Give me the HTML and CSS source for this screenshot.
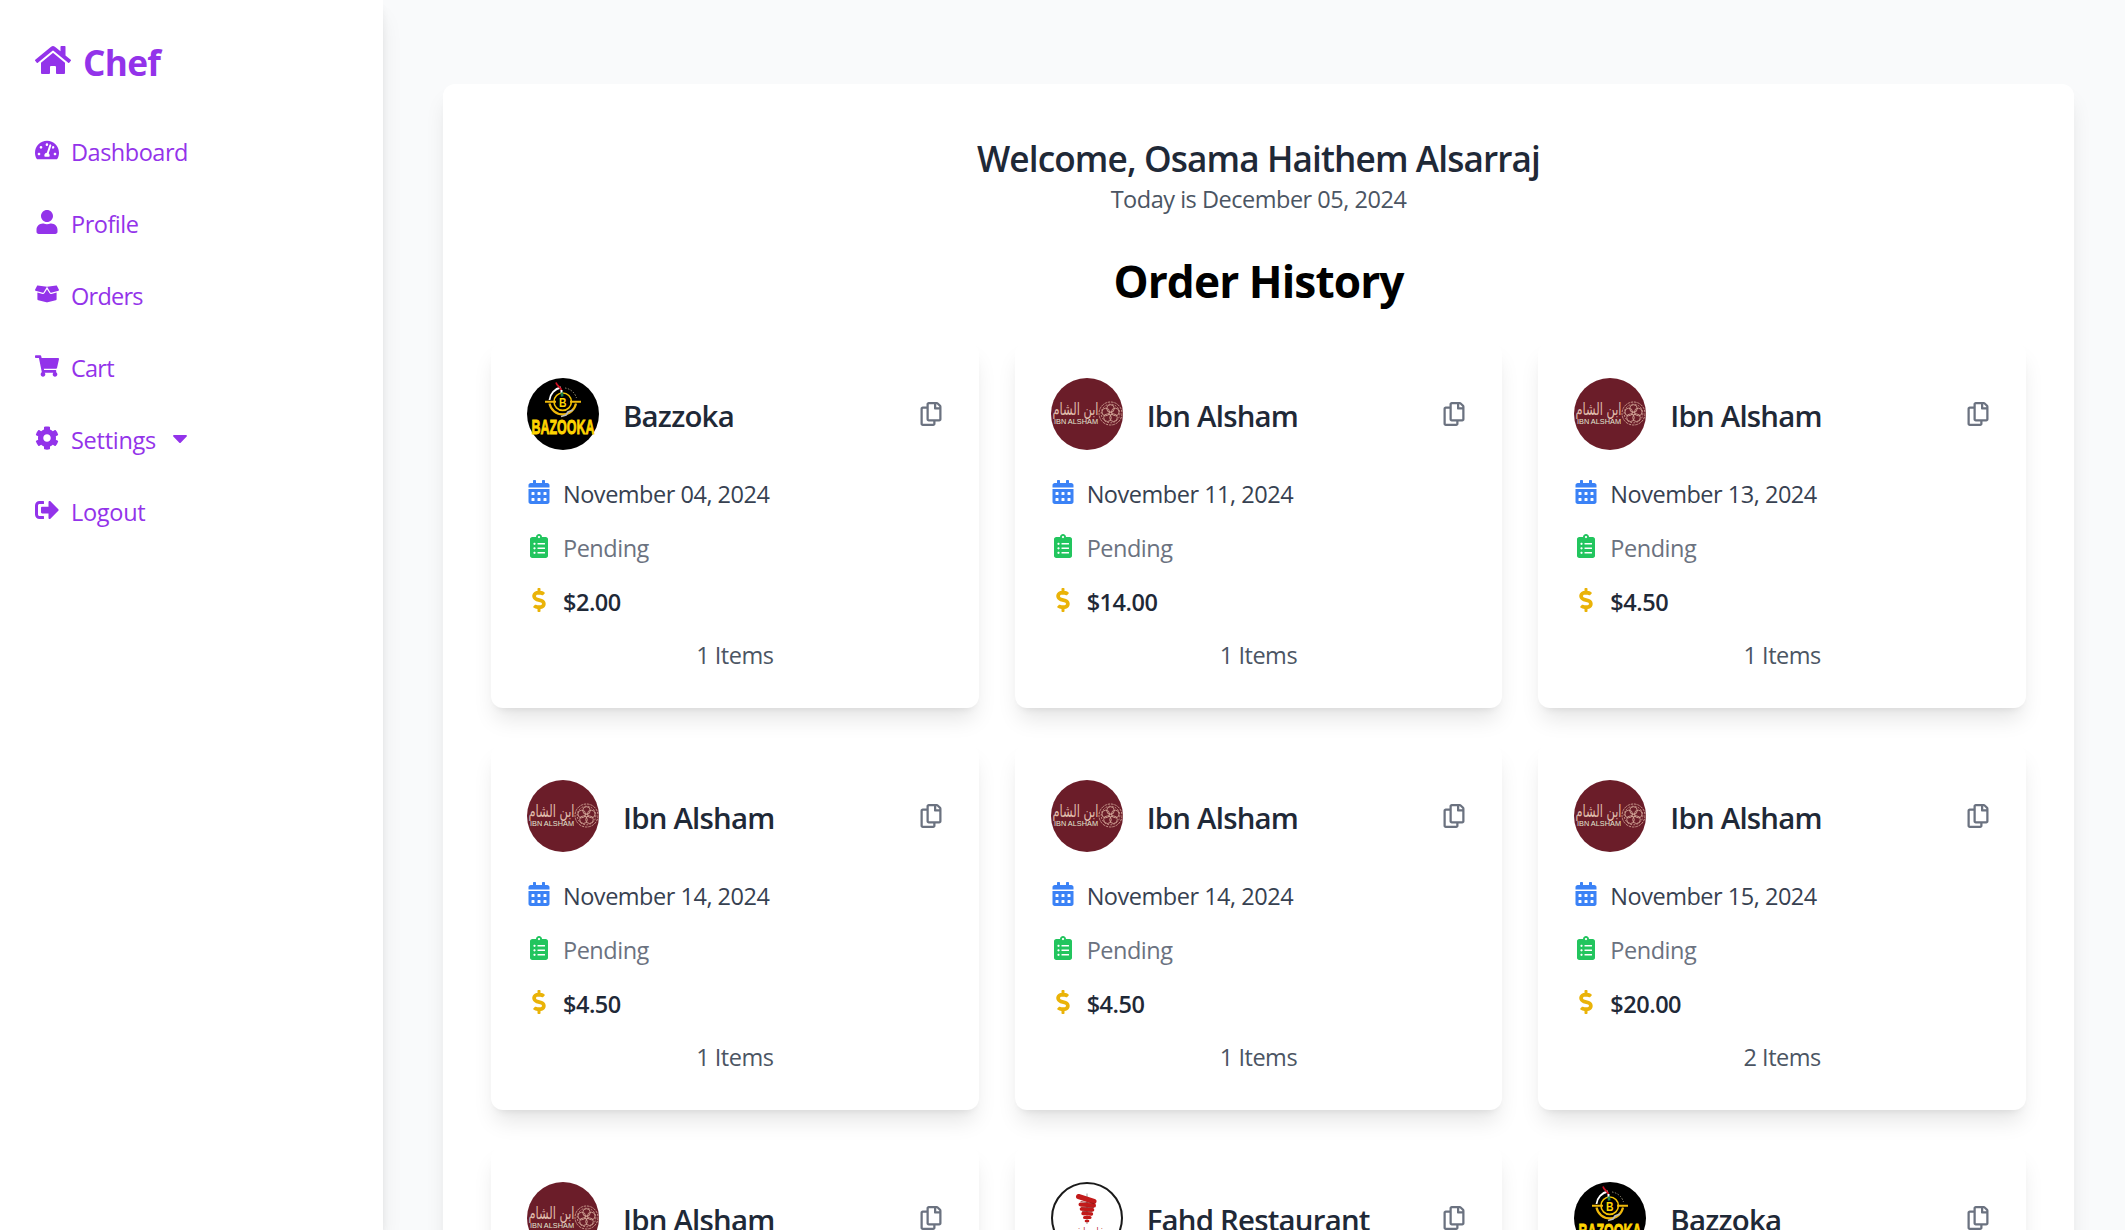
FILE: index.html
```html
<!DOCTYPE html>
<html lang="en">
<head>
<meta charset="utf-8">
<title>Chef - Order History</title>
<link rel="stylesheet" href="styles.css">
</head>
<body>
<svg class="sprite" aria-hidden="true">
  <symbol id="i-home" viewBox="0 0 576 512"><path d="M280.37 148.26L96 300.11V464a16 16 0 0 0 16 16l112.06-.29a16 16 0 0 0 15.92-16V368a16 16 0 0 1 16-16h64a16 16 0 0 1 16 16v95.64a16 16 0 0 0 16 16.05L464 480a16 16 0 0 0 16-16V300L295.67 148.26a12.19 12.19 0 0 0-15.3 0zM571.6 251.47L488 182.56V44.05a12 12 0 0 0-12-12h-56a12 12 0 0 0-12 12v72.61L318.47 43a48 48 0 0 0-61 0L4.34 251.47a12 12 0 0 0-1.6 16.9l25.5 31A12 12 0 0 0 45.15 301l235.22-193.74a12.19 12.19 0 0 1 15.3 0L530.9 301a12 12 0 0 0 16.9-1.6l25.5-31a12 12 0 0 0-1.7-16.93z"/></symbol>
  <symbol id="i-dash" viewBox="0 0 576 512"><path d="M288 32C128.94 32 0 160.94 0 320c0 52.8 14.25 102.26 39.06 144.8 5.61 9.62 16.3 15.2 27.44 15.2h443c11.14 0 21.83-5.58 27.44-15.2C561.75 422.26 576 372.8 576 320c0-159.06-128.94-288-288-288zm0 64c14.71 0 26.58 10.13 30.32 23.65-1.11 2.26-2.64 4.23-3.45 6.67l-9.22 27.67c-5.13 3.49-10.97 6.01-17.64 6.01-17.67 0-32-14.33-32-32S270.33 96 288 96zM96 384c-17.67 0-32-14.33-32-32s14.33-32 32-32 32 14.33 32 32-14.33 32-32 32zm48-160c-17.67 0-32-14.33-32-32s14.33-32 32-32 32 14.33 32 32-14.33 32-32 32zm246.77-72.41l-61.33 184C343.13 347.33 352 364.54 352 384c0 11.72-3.38 22.55-8.88 32H232.88c-5.5-9.45-8.88-20.28-8.88-32 0-33.94 26.5-61.43 59.9-63.59l61.34-184.01c4.17-12.56 17.73-19.45 30.36-15.17 12.57 4.19 19.35 17.79 15.17 30.36zm14.66 57.2l15.52-46.55c3.47-1.29 7.13-2.23 11.05-2.23 17.67 0 32 14.33 32 32s-14.33 32-32 32c-11.38-.01-20.89-6.28-26.57-15.22zM480 384c-17.67 0-32-14.33-32-32s14.33-32 32-32 32 14.33 32 32-14.33 32-32 32z"/></symbol>
  <symbol id="i-user" viewBox="0 0 448 512"><path d="M224 256c70.7 0 128-57.3 128-128S294.7 0 224 0 96 57.3 96 128s57.3 128 128 128zm89.6 32h-16.7c-22.2 10.2-46.9 16-72.9 16s-50.6-5.8-72.9-16h-16.7C60.2 288 0 348.2 0 422.4V464c0 26.5 21.5 48 48 48h352c26.5 0 48-21.5 48-48v-41.6c0-74.2-60.2-134.4-134.4-134.4z"/></symbol>
  <symbol id="i-box" viewBox="0 0 640 512"><path d="M425.7 256c-16.9 0-32.8-9-41.4-23.4L320 126l-64.2 106.6c-8.7 14.5-24.6 23.5-41.5 23.5-4.5 0-9-.6-13.3-1.9L64 215v178c0 14.7 10 27.5 24.2 31l216.2 54.1c10.2 2.5 20.9 2.5 31 0L551.8 424c14.2-3.6 24.2-16.4 24.2-31V215l-137 39.1c-4.3 1.3-8.8 1.9-13.3 1.9zm212.6-112.2L586.8 41c-3.1-6.2-9.8-9.8-16.7-8.9L320 64l91.7 152.1c3.8 6.3 11.4 9.3 18.5 7.3l197.9-56.5c9.9-2.9 14.7-13.9 10.2-23.1zM53.2 41L1.7 143.8c-4.6 9.2.3 20.2 10.1 23l197.9 56.5c7.1 2 14.7-1 18.5-7.3L320 64 69.8 32.1c-6.9-.8-13.5 2.7-16.6 8.9z"/></symbol>
  <symbol id="i-cart" viewBox="0 0 576 512"><path d="M528.12 301.319l47.273-208C578.806 78.301 567.391 64 551.99 64H159.208l-9.166-44.81C147.758 8.021 137.93 0 126.529 0H24C10.745 0 0 10.745 0 24v16c0 13.255 10.745 24 24 24h69.883l70.248 343.435C147.325 417.1 136 435.222 136 456c0 30.928 25.072 56 56 56s56-25.072 56-56c0-15.674-6.447-29.835-16.824-40h209.647C430.447 426.165 424 440.326 424 456c0 30.928 25.072 56 56 56s56-25.072 56-56c0-22.172-12.888-41.332-31.579-50.405l5.517-24.276c3.413-15.018-8.002-29.319-23.403-29.319H218.117l-6.545-32h293.145c11.206 0 20.92-7.754 23.403-18.681z"/></symbol>
  <symbol id="i-cog" viewBox="0 0 512 512"><path d="M487.4 315.7l-42.6-24.6c4.3-23.2 4.3-47 0-70.2l42.6-24.6c4.9-2.8 7.1-8.6 5.5-14-11.1-35.6-30-67.8-54.7-94.6-3.8-4.1-10-5.1-14.8-2.3L380.8 110c-17.9-15.4-38.5-27.3-60.8-35.1V25.8c0-5.6-3.9-10.5-9.4-11.7-36.7-8.2-74.3-7.8-109.2 0-5.5 1.2-9.4 6.1-9.4 11.7V75c-22.2 7.9-42.8 19.8-60.8 35.1L88.7 85.5c-4.9-2.8-11-1.9-14.8 2.3-24.7 26.7-43.6 58.9-54.7 94.6-1.7 5.4.6 11.2 5.5 14L67.3 221c-4.3 23.2-4.3 47 0 70.2l-42.6 24.6c-4.9 2.8-7.1 8.6-5.5 14 11.1 35.6 30 67.8 54.7 94.6 3.8 4.1 10 5.1 14.8 2.3l42.6-24.6c17.9 15.4 38.5 27.3 60.8 35.1v49.2c0 5.6 3.9 10.5 9.4 11.7 36.7 8.2 74.3 7.8 109.2 0 5.5-1.2 9.4-6.1 9.4-11.7v-49.2c22.2-7.9 42.8-19.8 60.8-35.1l42.6 24.6c4.9 2.8 11 1.9 14.8-2.3 24.7-26.7 43.6-58.9 54.7-94.6 1.5-5.5-.7-11.3-5.6-14.1zM256 336c-44.1 0-80-35.9-80-80s35.9-80 80-80 80 35.9 80 80-35.9 80-80 80z"/></symbol>
  <symbol id="i-out" viewBox="0 0 512 512"><path d="M497 273L329 441c-15 15-41 4.5-41-17v-96H152c-13.3 0-24-10.7-24-24v-96c0-13.3 10.7-24 24-24h136V88c0-21.4 25.9-32 41-17l168 168c9.3 9.4 9.3 24.6 0 34zM192 436v-40c0-6.6-5.4-12-12-12H96c-17.7 0-32-14.3-32-32V160c0-17.7 14.3-32 32-32h84c6.6 0 12-5.4 12-12V76c0-6.6-5.4-12-12-12H96c-53 0-96 43-96 96v192c0 53 43 96 96 96h84c6.6 0 12-5.4 12-12z"/></symbol>
  <symbol id="i-caret" viewBox="0 0 320 512"><path d="M31.3 192h257.3c17.8 0 26.7 21.5 14.1 34.1L174.1 354.8c-7.8 7.8-20.5 7.8-28.3 0L17.2 226.1C4.6 213.5 13.5 192 31.3 192z"/></symbol>
  <symbol id="i-cal" viewBox="0 0 448 512"><path d="M0 464c0 26.5 21.5 48 48 48h352c26.5 0 48-21.5 48-48V192H0v272zm320-196c0-6.6 5.4-12 12-12h40c6.6 0 12 5.4 12 12v40c0 6.6-5.4 12-12 12h-40c-6.6 0-12-5.4-12-12v-40zm0 128c0-6.6 5.4-12 12-12h40c6.6 0 12 5.4 12 12v40c0 6.6-5.4 12-12 12h-40c-6.6 0-12-5.4-12-12v-40zM192 268c0-6.6 5.4-12 12-12h40c6.6 0 12 5.4 12 12v40c0 6.6-5.4 12-12 12h-40c-6.6 0-12-5.4-12-12v-40zm0 128c0-6.6 5.4-12 12-12h40c6.6 0 12 5.4 12 12v40c0 6.6-5.4 12-12 12h-40c-6.6 0-12-5.4-12-12v-40zM64 268c0-6.6 5.4-12 12-12h40c6.6 0 12 5.4 12 12v40c0 6.6-5.4 12-12 12H76c-6.6 0-12-5.4-12-12v-40zm0 128c0-6.6 5.4-12 12-12h40c6.6 0 12 5.4 12 12v40c0 6.6-5.4 12-12 12H76c-6.6 0-12-5.4-12-12v-40zM400 64h-48V16c0-8.8-7.2-16-16-16h-32c-8.8 0-16 7.2-16 16v48H160V16c0-8.8-7.2-16-16-16h-32c-8.8 0-16 7.2-16 16v48H48C21.5 64 0 85.5 0 112v48h448v-48c0-26.5-21.5-48-48-48z"/></symbol>
  <symbol id="i-clip" viewBox="0 0 384 512"><path d="M336 64h-80c0-35.3-28.7-64-64-64s-64 28.7-64 64H48C21.5 64 0 85.5 0 112v352c0 26.5 21.5 48 48 48h288c26.5 0 48-21.5 48-48V112c0-26.5-21.5-48-48-48zM96 424c-13.3 0-24-10.7-24-24s10.7-24 24-24 24 10.7 24 24-10.7 24-24 24zm0-96c-13.3 0-24-10.7-24-24s10.7-24 24-24 24 10.7 24 24-10.7 24-24 24zm0-96c-13.3 0-24-10.7-24-24s10.7-24 24-24 24 10.7 24 24-10.7 24-24 24zm96-192c13.3 0 24 10.7 24 24s-10.7 24-24 24-24-10.7-24-24 10.7-24 24-24zm128 368c0 4.4-3.6 8-8 8H168c-4.4 0-8-3.6-8-8v-16c0-4.4 3.6-8 8-8h144c4.4 0 8 3.6 8 8v16zm0-96c0 4.4-3.6 8-8 8H168c-4.4 0-8-3.6-8-8v-16c0-4.4 3.6-8 8-8h144c4.4 0 8 3.6 8 8v16zm0-96c0 4.4-3.6 8-8 8H168c-4.4 0-8-3.6-8-8v-16c0-4.4 3.6-8 8-8h144c4.4 0 8 3.6 8 8v16z"/></symbol>
  <symbol id="i-usd" viewBox="0 0 288 512"><path d="M209.2 233.4l-108-31.6C88.7 198.2 80 186.5 80 173.5c0-16.3 13.2-29.5 29.5-29.5h66.3c12.2 0 24.2 3.7 34.2 10.5 6.1 4.1 14.3 3.1 19.5-2l34.8-34c7.1-6.9 6.1-18.4-1.8-24.5C238 74.8 207.4 64.1 176 64V16c0-8.8-7.2-16-16-16h-32c-8.8 0-16 7.2-16 16v48h-2.5C45.8 64-5.4 118.7.5 183.6c4.2 46.1 39.4 83.6 83.8 96.6l102.5 30c12.5 3.7 21.2 15.3 21.2 28.3 0 16.3-13.2 29.5-29.5 29.5h-66.3C100 368 88 364.3 78 357.5c-6.1-4.1-14.3-3.1-19.5 2l-34.8 34c-7.1 6.9-6.1 18.4 1.8 24.5 24.5 19.2 55.1 29.9 86.5 30v48c0 8.8 7.2 16 16 16h32c8.8 0 16-7.2 16-16v-48.2c46.6-.9 90.3-28.6 105.7-72.7 21.5-61.6-14.6-124.8-72.5-141.7z"/></symbol>
  <symbol id="i-copy" viewBox="0 0 448 512"><path d="M433.941 65.941l-51.882-51.882A48 48 0 0 0 348.118 0H176c-26.51 0-48 21.49-48 48v48H48c-26.51 0-48 21.49-48 48v320c0 26.51 21.49 48 48 48h224c26.51 0 48-21.49 48-48v-48h80c26.51 0 48-21.49 48-48V99.882a48 48 0 0 0-14.059-33.941zM266 464H54a6 6 0 0 1-6-6V150a6 6 0 0 1 6-6h74v224c0 26.51 21.49 48 48 48h96v42a6 6 0 0 1-6 6zm128-96H182a6 6 0 0 1-6-6V54a6 6 0 0 1 6-6h106v88c0 13.255 10.745 24 24 24h88v202a6 6 0 0 1-6 6zm6-256h-64V48h9.632c1.591 0 3.117.632 4.243 1.757l48.368 48.368a6 6 0 0 1 1.757 4.243V112z"/></symbol>
  <symbol id="l-bazooka" viewBox="0 0 72 72">
    <circle cx="36" cy="36" r="36" fill="#000"/>
    <g fill="none">
      <path d="M22.500 22A14 14 0 0 1 34 9.500" stroke="#fff" stroke-width="1.800"/>
      <path d="M38 10A14 14 0 0 1 49.500 20" stroke="#99917a" stroke-width="1" stroke-dasharray="1.500 1.500"/>
      <path d="M22.500 25.500A13.500 13.500 0 0 0 49 25.500" stroke="#f0b90b" stroke-width="2.200"/>
      <circle cx="35.700" cy="23.700" r="8.700" stroke="#f5c400" stroke-width="1.600"/>
      <path d="M18 23.700h11M43 23.700h11" stroke="#f0b90b" stroke-width="2"/>
      <path d="M29 4.500c1 4 4.500 4 5.500 8" stroke="#d01022" stroke-width="1.700"/>
      <path d="M34.500 12v3" stroke="#fff" stroke-width="2"/>
      <path d="M34.800 14.500l.4 4" stroke="#18804b" stroke-width="2.600"/>
      <path d="M34 38.500l5-1.500 2-3 5-2" stroke="#bdbdbd" stroke-width="1.800"/>
    </g>
    <text class="mark" x="32" y="29" font-size="13" textLength="7.500" lengthAdjust="spacingAndGlyphs" fill="#ffd500">B</text>
    <text class="mark" x="4.500" y="56" font-size="20.500" textLength="63" lengthAdjust="spacingAndGlyphs" fill="#ffd500" stroke="#ffd500" stroke-width=".9">BAZOOKA</text>
  </symbol>
  <symbol id="l-alsham" viewBox="0 0 72 72">
    <circle cx="36" cy="36" r="36" fill="#6b1d29"/>
    <text class="arabic" x="1.500" y="36.500" font-size="16.500" textLength="46" lengthAdjust="spacingAndGlyphs" fill="#e0bcac">ابن الشام</text>
    <text class="latin" x="3" y="45.500" font-size="8" textLength="44" lengthAdjust="spacingAndGlyphs" fill="#e2e6d2">IBN ALSHAM</text>
    <g fill="none" stroke="#d3a596" stroke-width=".9">
      <circle cx="59.500" cy="35.500" r="11.500" stroke-dasharray="2.500 .9"/>
      <circle cx="59.500" cy="30.500" r="3.800"/>
      <circle cx="54.700" cy="34" r="3.800"/>
      <circle cx="64.300" cy="34" r="3.800"/>
      <circle cx="56.500" cy="39.700" r="3.800"/>
      <circle cx="62.500" cy="39.700" r="3.800"/>
      <circle cx="59.500" cy="35.500" r="9.300" stroke-dasharray="1.800 1.400"/>
      <circle cx="59.500" cy="35.500" r="1.500"/>
    </g>
  </symbol>
  <symbol id="l-fahd" viewBox="0 0 72 72">
    <circle cx="36" cy="36" r="35" fill="#fff" stroke="#1a1a1a" stroke-width="2"/>
    <path d="M36 11.500V42" stroke="#999" stroke-width="1"/>
    <g fill="none" stroke="#c21a1a" stroke-linecap="round">
      <path d="M27.500 14.500l15.500 5" stroke-width="5"/>
      <path d="M29.500 22.500l13.500 1" stroke-width="4"/>
      <path d="M30.500 27l11 .8" stroke-width="3.600"/>
      <path d="M32 31.500l8.500.5" stroke-width="3.400"/>
      <path d="M33.500 35.500h5.500" stroke-width="3"/>
      <path d="M35 39h2" stroke-width="2.600"/>
      <path d="M30 19.600l13 2M30.500 25.200l12 .3M31.500 29.400l9.500.3" stroke="#8d1010" stroke-width=".8"/>
    </g>
    <text class="arabic" x="19" y="53" font-size="11" textLength="35" lengthAdjust="spacingAndGlyphs" fill="#b32222">شاورما فهد</text>
  </symbol>
</svg>

<div class="layout">
  <aside class="sidebar">
    <div class="brand"><svg class="icon"><use href="#i-home"/></svg><span>Chef</span></div>
    <nav class="menu">
      <a class="menu-link"><svg class="icon"><use href="#i-dash"/></svg><span>Dashboard</span></a>
      <a class="menu-link"><svg class="icon"><use href="#i-user"/></svg><span>Profile</span></a>
      <a class="menu-link tight"><svg class="icon"><use href="#i-box"/></svg><span>Orders</span></a>
      <a class="menu-link tight"><svg class="icon"><use href="#i-cart"/></svg><span>Cart</span></a>
      <a class="menu-link loose"><svg class="icon"><use href="#i-cog"/></svg><span>Settings</span><svg class="icon"><use href="#i-caret"/></svg></a>
      <a class="menu-link loose"><svg class="icon"><use href="#i-out"/></svg><span>Logout</span></a>
    </nav>
  </aside>

  <main class="content">
    <section class="panel">
      <header class="welcome">
        <h1 class="welcome-title">Welcome, Osama Haithem Alsarraj</h1>
        <p class="welcome-date">Today is December 05, 2024</p>
      </header>
      <h2 class="heading">Order History</h2>
      <div class="orders">
        <article class="card">
          <div class="card-head"><svg class="avatar"><use href="#l-bazooka"/></svg><h3 class="name">Bazzoka</h3><svg class="icon copy"><use href="#i-copy"/></svg></div>
          <p class="row date"><svg class="icon"><use href="#i-cal"/></svg><span>November 04, 2024</span></p>
          <p class="row status"><svg class="icon"><use href="#i-clip"/></svg><span>Pending</span></p>
          <p class="row price"><svg class="icon"><use href="#i-usd"/></svg><span>$2.00</span></p>
          <p class="count">1 Items</p>
        </article>
        <article class="card">
          <div class="card-head"><svg class="avatar"><use href="#l-alsham"/></svg><h3 class="name">Ibn Alsham</h3><svg class="icon copy"><use href="#i-copy"/></svg></div>
          <p class="row date"><svg class="icon"><use href="#i-cal"/></svg><span>November 11, 2024</span></p>
          <p class="row status"><svg class="icon"><use href="#i-clip"/></svg><span>Pending</span></p>
          <p class="row price"><svg class="icon"><use href="#i-usd"/></svg><span>$14.00</span></p>
          <p class="count">1 Items</p>
        </article>
        <article class="card">
          <div class="card-head"><svg class="avatar"><use href="#l-alsham"/></svg><h3 class="name">Ibn Alsham</h3><svg class="icon copy"><use href="#i-copy"/></svg></div>
          <p class="row date"><svg class="icon"><use href="#i-cal"/></svg><span>November 13, 2024</span></p>
          <p class="row status"><svg class="icon"><use href="#i-clip"/></svg><span>Pending</span></p>
          <p class="row price"><svg class="icon"><use href="#i-usd"/></svg><span>$4.50</span></p>
          <p class="count">1 Items</p>
        </article>
        <article class="card">
          <div class="card-head"><svg class="avatar"><use href="#l-alsham"/></svg><h3 class="name">Ibn Alsham</h3><svg class="icon copy"><use href="#i-copy"/></svg></div>
          <p class="row date"><svg class="icon"><use href="#i-cal"/></svg><span>November 14, 2024</span></p>
          <p class="row status"><svg class="icon"><use href="#i-clip"/></svg><span>Pending</span></p>
          <p class="row price"><svg class="icon"><use href="#i-usd"/></svg><span>$4.50</span></p>
          <p class="count">1 Items</p>
        </article>
        <article class="card">
          <div class="card-head"><svg class="avatar"><use href="#l-alsham"/></svg><h3 class="name">Ibn Alsham</h3><svg class="icon copy"><use href="#i-copy"/></svg></div>
          <p class="row date"><svg class="icon"><use href="#i-cal"/></svg><span>November 14, 2024</span></p>
          <p class="row status"><svg class="icon"><use href="#i-clip"/></svg><span>Pending</span></p>
          <p class="row price"><svg class="icon"><use href="#i-usd"/></svg><span>$4.50</span></p>
          <p class="count">1 Items</p>
        </article>
        <article class="card">
          <div class="card-head"><svg class="avatar"><use href="#l-alsham"/></svg><h3 class="name">Ibn Alsham</h3><svg class="icon copy"><use href="#i-copy"/></svg></div>
          <p class="row date"><svg class="icon"><use href="#i-cal"/></svg><span>November 15, 2024</span></p>
          <p class="row status"><svg class="icon"><use href="#i-clip"/></svg><span>Pending</span></p>
          <p class="row price"><svg class="icon"><use href="#i-usd"/></svg><span>$20.00</span></p>
          <p class="count">2 Items</p>
        </article>
        <article class="card">
          <div class="card-head"><svg class="avatar"><use href="#l-alsham"/></svg><h3 class="name">Ibn Alsham</h3><svg class="icon copy"><use href="#i-copy"/></svg></div>
        </article>
        <article class="card">
          <div class="card-head"><svg class="avatar"><use href="#l-fahd"/></svg><h3 class="name">Fahd Restaurant</h3><svg class="icon copy"><use href="#i-copy"/></svg></div>
        </article>
        <article class="card">
          <div class="card-head"><svg class="avatar"><use href="#l-bazooka"/></svg><h3 class="name">Bazzoka</h3><svg class="icon copy"><use href="#i-copy"/></svg></div>
        </article>
      </div>
    </section>
  </main>
</div>
</body>
</html>
```

FILE: styles.css
```css
* { box-sizing: border-box; margin: 0; padding: 0; }

body {
  height: 100vh;
  overflow: hidden;
  background: #f9fafb;
  color: #000;
  font: 23.5px/36px "Open Sans", "Noto Sans", sans-serif;
  letter-spacing: -.48px;
}

.sprite { display: none; }

.icon {
  flex: none;
  width: 24px;
  height: 24px;
  fill: currentColor;
}

.layout { display: flex; height: 100vh; }

/* Sidebar */
.sidebar {
  position: relative;
  z-index: 1;
  flex: none;
  width: 383px;
  padding: 36px 35px;
  background: #fff;
  color: #9333ea;
  box-shadow: 0 15px 22.5px -4.5px rgba(0, 0, 0, .1), 0 6px 9px -3px rgba(0, 0, 0, .1);
}

.brand {
  display: flex;
  align-items: center;
  gap: 12px;
  height: 48px;
  margin-bottom: 48px;
  font-size: 35.2px;
  line-height: 48px;
  font-weight: 700;
  letter-spacing: -.7px;
}
.brand .icon { width: 36px; height: 36px; }
.brand span { padding-top: 4px; }

.menu { display: flex; flex-direction: column; gap: 36px; }
.menu-link { display: flex; align-items: center; gap: 12px; height: 36px; }
.menu-link span,
.row span { padding-top: 3px; }
.tight { letter-spacing: -.75px; }
.loose { letter-spacing: -.27px; }

/* Main panel */
.content { flex: 1; padding: 84px 51px 0 60px; }

.panel {
  min-height: 1400px;
  padding: 48px;
  background: #fff;
  border-radius: 12px;
  box-shadow: 0 15px 22.5px -4.5px rgba(0, 0, 0, .1), 0 6px 9px -6px rgba(0, 0, 0, .1);
}

.welcome { margin-bottom: 36px; text-align: center; }
.welcome-title {
  height: 48px;
  padding-top: 2px;
  color: #1f2937;
  font-size: 35.2px;
  line-height: 48px;
  font-weight: 600;
  letter-spacing: -.88px;
}
.welcome-date { height: 36px; padding-top: 1px; color: #4b5563; }

.heading {
  height: 54px;
  margin-bottom: 36px;
  padding-top: 2px;
  text-align: center;
  font-size: 44.2px;
  line-height: 54px;
  font-weight: 700;
  letter-spacing: -.9px;
}

/* Order cards */
.orders {
  display: grid;
  grid-template-columns: repeat(3, minmax(0, 1fr));
  grid-auto-rows: 366px;
  gap: 36px;
}

.card {
  display: flex;
  flex-direction: column;
  gap: 18px;
  padding: 36px;
  background: #fff;
  border-radius: 12px;
  box-shadow: 0 15px 22.5px -4.5px rgba(0, 0, 0, .1), 0 6px 9px -6px rgba(0, 0, 0, .1);
}

.card-head { display: flex; align-items: center; gap: 24px; margin-bottom: 6px; }
.avatar { flex: none; width: 72px; height: 72px; }
.name {
  flex: 1;
  padding-top: 4px;
  color: #1f2937;
  font-size: 29.4px;
  line-height: 42px;
  font-weight: 600;
  letter-spacing: -.78px;
}
.copy { color: #6b7280; }

.row { display: flex; align-items: center; gap: 12px; height: 36px; }
.date { color: #374151; }
.date .icon { color: #3b82f6; }
.status { color: #6b7280; }
.status .icon { color: #22c55e; }
.price { color: #1f2937; font-weight: 600; }
.price .icon { color: #eab308; }
.count { height: 36px; padding-top: 1px; color: #4b5563; text-align: center; }

/* Lettering inside the restaurant logos */
.mark { font-family: "Liberation Sans", sans-serif; font-weight: 700; letter-spacing: 0; }
.latin { font-family: "Liberation Sans", sans-serif; letter-spacing: 0; }
.arabic { font-family: "DejaVu Sans", sans-serif; letter-spacing: 0; }
```
